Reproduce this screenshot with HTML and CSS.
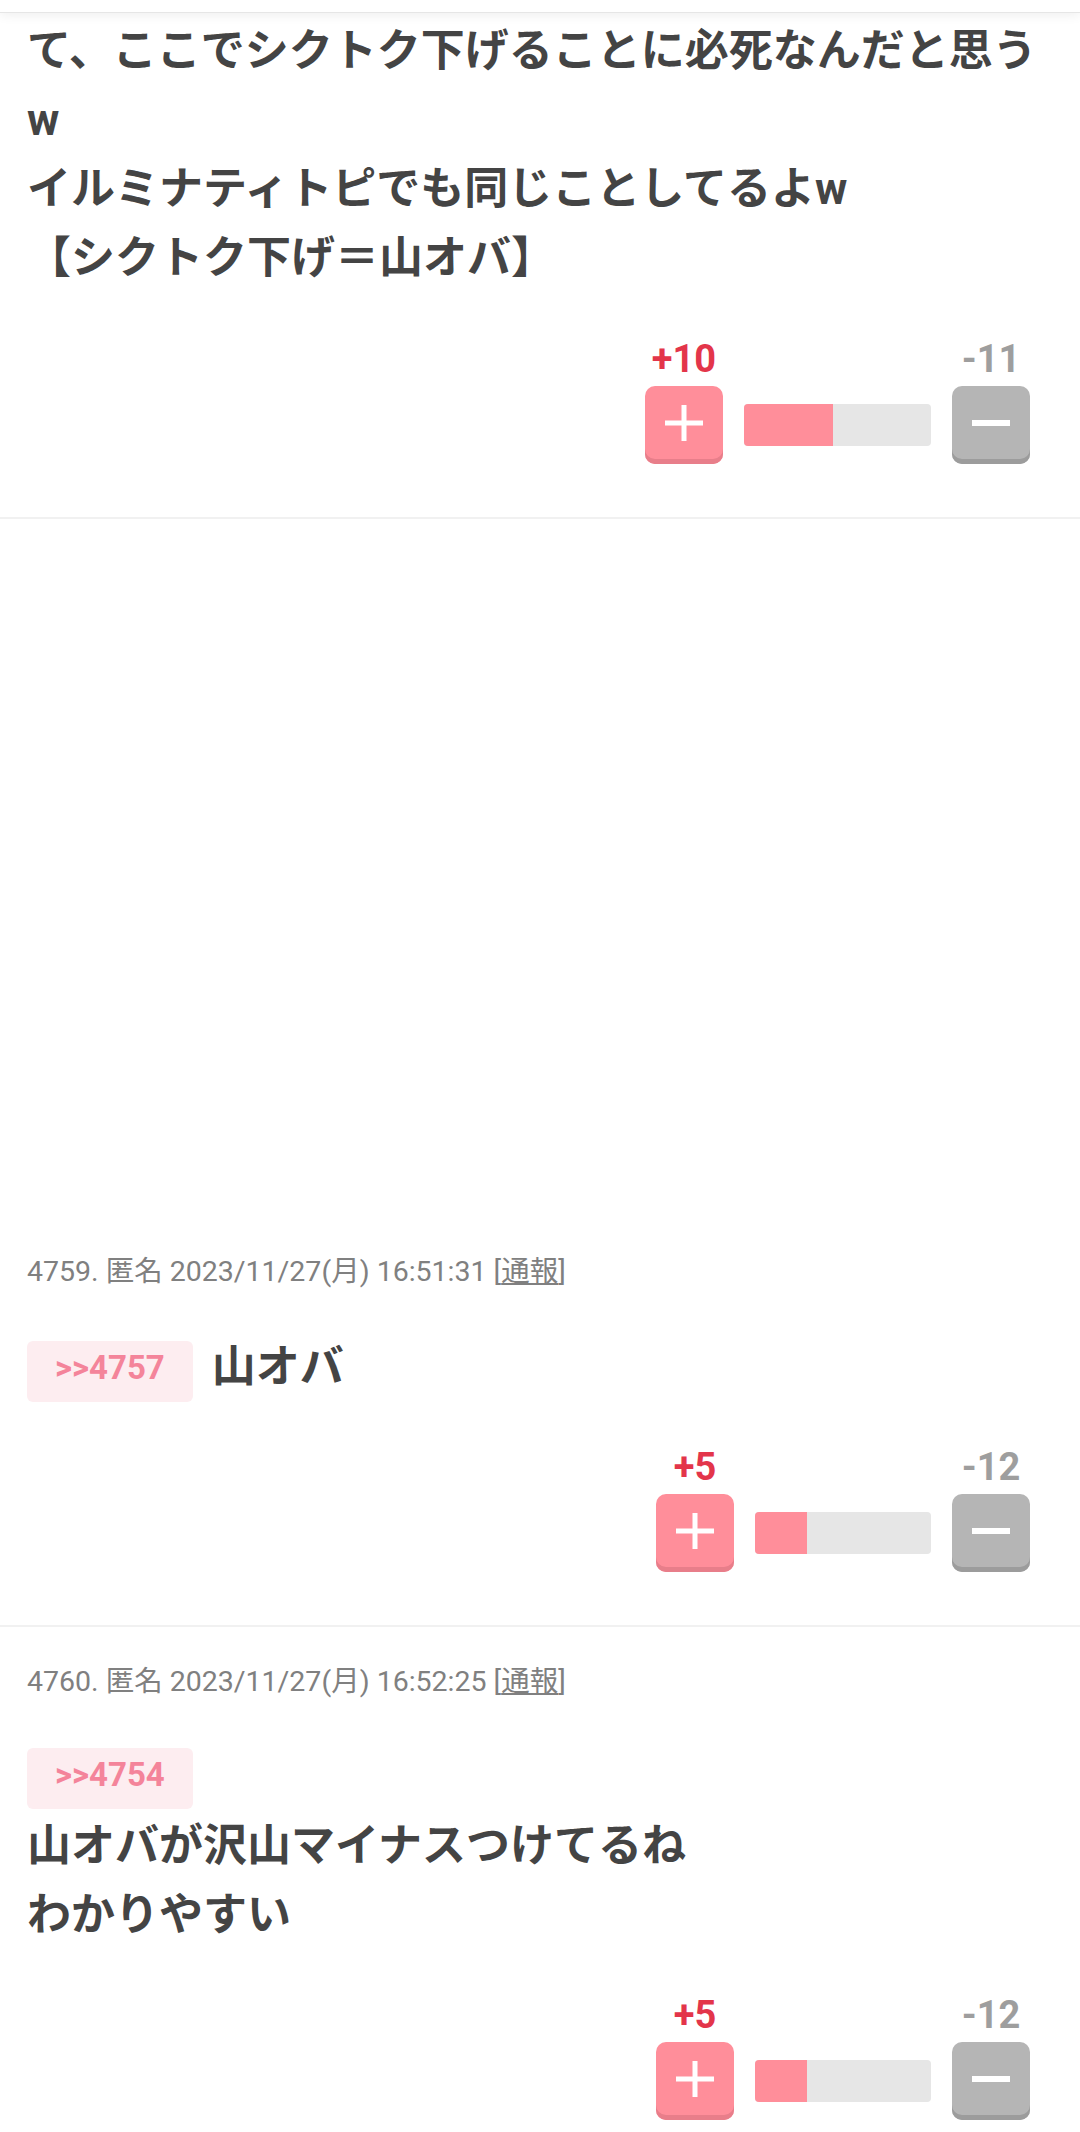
FILE: index.html
```html
<!DOCTYPE html>
<html lang="ja">
<head>
    <meta charset="UTF-8">
    <meta name="viewport" content="width=device-width, initial-scale=1.0">
    <title>コメント</title>
    <link rel="stylesheet" href="styles.css">
</head>
<body>
    <div class="topbar"></div>

    <main class="comments">
        <!-- continued from above -->
        <article class="comment comment--first">
            <p class="body">て、ここでシクトク下げることに必死なんだと思うw<br>イルミナティトピでも同じことしてるよw<br>【シクトク下げ＝山オバ】</p>
            <div class="vote">
                <div class="vote-col">
                    <span class="vote-count plus">+10</span>
                    <button class="vote-btn plus" aria-label="プラス">
                        <svg width="40" height="40" viewBox="0 0 40 40"><path d="M20 2v36M1 20h38" stroke="#fff" stroke-width="5"/></svg>
                    </button>
                </div>
                <div class="vote-bar"><span class="vote-fill" style="width: 47.6%"></span></div>
                <div class="vote-col">
                    <span class="vote-count minus">-11</span>
                    <button class="vote-btn minus" aria-label="マイナス">
                        <svg width="40" height="40" viewBox="0 0 40 40"><path d="M1 20h38" stroke="#fff" stroke-width="6"/></svg>
                    </button>
                </div>
            </div>
        </article>

        <div class="ad-slot"></div>

        <article class="comment comment--after-ad">
            <p class="meta">4759. 匿名 2023/11/27(月) 16:51:31 [<a href="#">通報</a>]</p>
            <div class="reply reply--inline">
                <a class="anchor" href="#">&gt;&gt;4757</a>
                <p class="body">山オバ</p>
            </div>
            <div class="vote">
                <div class="vote-col">
                    <span class="vote-count plus">+5</span>
                    <button class="vote-btn plus" aria-label="プラス">
                        <svg width="40" height="40" viewBox="0 0 40 40"><path d="M20 2v36M1 20h38" stroke="#fff" stroke-width="5"/></svg>
                    </button>
                </div>
                <div class="vote-bar vote-bar--short"><span class="vote-fill" style="width: 29.4%"></span></div>
                <div class="vote-col">
                    <span class="vote-count minus">-12</span>
                    <button class="vote-btn minus" aria-label="マイナス">
                        <svg width="40" height="40" viewBox="0 0 40 40"><path d="M1 20h38" stroke="#fff" stroke-width="6"/></svg>
                    </button>
                </div>
            </div>
        </article>

        <article class="comment">
            <p class="meta">4760. 匿名 2023/11/27(月) 16:52:25 [<a href="#">通報</a>]</p>
            <div class="reply">
                <a class="anchor" href="#">&gt;&gt;4754</a>
            </div>
            <p class="body">山オバが沢山マイナスつけてるね<br>わかりやすい</p>
            <div class="vote">
                <div class="vote-col">
                    <span class="vote-count plus">+5</span>
                    <button class="vote-btn plus" aria-label="プラス">
                        <svg width="40" height="40" viewBox="0 0 40 40"><path d="M20 2v36M1 20h38" stroke="#fff" stroke-width="5"/></svg>
                    </button>
                </div>
                <div class="vote-bar vote-bar--short"><span class="vote-fill" style="width: 29.4%"></span></div>
                <div class="vote-col">
                    <span class="vote-count minus">-12</span>
                    <button class="vote-btn minus" aria-label="マイナス">
                        <svg width="40" height="40" viewBox="0 0 40 40"><path d="M1 20h38" stroke="#fff" stroke-width="6"/></svg>
                    </button>
                </div>
            </div>
        </article>
    </main>
</body>
</html>
```

FILE: styles.css
```css
* {
    box-sizing: border-box;
}
body {
    margin: 0;
    padding: 0;
    background-color: #fff;
    color: #444;
    font-family: Roboto, "Noto Sans CJK JP", sans-serif;
}
.topbar {
    height: 12px;
    background-color: #fff;
    box-shadow: 0 1px 0 #e6e6e6, 0 3px 12px rgba(0, 0, 0, 0.07);
    position: relative;
    z-index: 1;
}
.comments {
    display: flex;
    flex-direction: column;
}
.comment {
    padding: 37px 27px 53px;
    border-bottom: 2px solid #f1f1f1;
}
.comment--first {
    padding-top: 5px;
}
.comment--after-ad {
    padding-top: 42px;
}
.comment--after-ad .meta {
    margin-bottom: 43px;
}
.ad-slot {
    height: 693px;
}
.meta {
    margin: 0 0 48px;
    font-size: 28.5px;
    line-height: 36px;
    color: #808080;
}
.meta a {
    color: #808080;
    text-decoration: underline;
}
.body {
    margin: 0;
    font-size: 44px;
    line-height: 69px;
    font-weight: 700;
    color: #444;
}
.reply {
    display: flex;
    margin-bottom: 3px;
}
.reply--inline {
    align-items: flex-start;
    gap: 19px;
    margin-bottom: 0;
}
.reply--inline .anchor {
    margin-top: 8px;
}
.anchor {
    display: inline-block;
    height: 61px;
    padding: 0 28px 8px;
    line-height: 53px;
    font-size: 33px;
    font-weight: 700;
    color: #f4849a;
    background-color: #fdedf0;
    border-radius: 6px;
    text-decoration: none;
}
.vote {
    display: flex;
    justify-content: flex-end;
    align-items: flex-end;
    gap: 21px;
    margin: 45px 23px 0 0;
}
.comment--first .vote {
    margin-top: 46px;
}
.vote-col {
    display: flex;
    flex-direction: column;
    align-items: center;
    gap: 7px;
}
.vote-count {
    font-size: 38px;
    line-height: 40px;
    font-weight: 700;
}
.vote-count.plus {
    color: #e3354a;
}
.vote-count.minus {
    color: #9e9e9e;
}
.vote-btn {
    width: 78px;
    height: 78px;
    padding: 0 0 5px;
    border: none;
    border-radius: 10px;
    display: flex;
    align-items: center;
    justify-content: center;
}
.vote-btn.plus {
    background-color: #ff8e9a;
    box-shadow: inset 0 -5px 0 #e87e8a;
}
.vote-btn.minus {
    background-color: #b5b5b5;
    box-shadow: inset 0 -5px 0 #9c9c9c;
}
.vote-bar {
    width: 187px;
    height: 42px;
    margin-bottom: 18px;
    background-color: #e6e6e6;
    border-radius: 4px;
    overflow: hidden;
    display: flex;
}
.vote-bar--short {
    width: 176px;
}
.vote-fill {
    display: block;
    height: 100%;
    background-color: #ff8e9a;
}
```
